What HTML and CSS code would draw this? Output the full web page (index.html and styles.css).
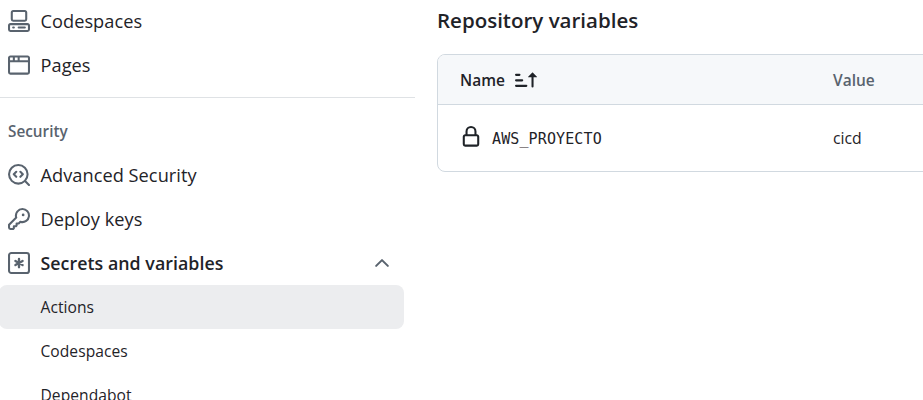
FILE: index.html
```html
<!DOCTYPE html>
<html lang="en">
<head>
<meta charset="utf-8">
<title>Actions secrets and variables</title>
<link rel="stylesheet" href="styles.css">
</head>
<body>
<div class="page">
  <nav class="sidebar">
    <a class="item"><svg class="icon" viewBox="0 0 16 16"><path d="M0 11.25c0-.966.784-1.75 1.75-1.75h12.5c.966 0 1.75.784 1.75 1.75v3A1.75 1.75 0 0 1 14.25 16H1.75A1.75 1.75 0 0 1 0 14.25Zm2-9.5C2 .784 2.784 0 3.75 0h8.5C13.216 0 14 .784 14 1.75v5a1.75 1.75 0 0 1-1.75 1.75h-8.5A1.75 1.75 0 0 1 2 6.75Zm1.75-.25a.25.25 0 0 0-.25.25v5c0 .138.112.25.25.25h8.5a.25.25 0 0 0 .25-.25v-5a.25.25 0 0 0-.25-.25Zm-2 9.5a.25.25 0 0 0-.25.25v3c0 .138.112.25.25.25h12.5a.25.25 0 0 0 .25-.25v-3a.25.25 0 0 0-.25-.25Z"/><path d="M7 12.75a.75.75 0 0 1 .75-.75h4.5a.75.75 0 0 1 0 1.5h-4.5a.75.75 0 0 1-.75-.75Zm-4 0a.75.75 0 0 1 .75-.75h.5a.75.75 0 0 1 0 1.5h-.5a.75.75 0 0 1-.75-.75Z"/></svg><span>Codespaces</span></a>
    <a class="item"><svg class="icon" viewBox="0 0 16 16"><path d="M0 2.75C0 1.784.784 1 1.75 1h12.5c.966 0 1.75.784 1.75 1.75v10.5A1.75 1.75 0 0 1 14.25 15H1.75A1.75 1.75 0 0 1 0 13.25ZM14.5 6h-13v7.25c0 .138.112.25.25.25h12.5a.25.25 0 0 0 .25-.25Zm-6-3.5v2h6V2.75a.25.25 0 0 0-.25-.25ZM5 2.5v2h2v-2Zm-3.25 0a.25.25 0 0 0-.25.25V4.5h2v-2Z"/></svg><span>Pages</span></a>
    <hr class="divider">
    <h3 class="group">Security</h3>
    <a class="item"><svg class="icon line" viewBox="0 0 16 16"><circle cx="7.5" cy="7.5" r="6.75"/><path d="M12.4 12.4l2.85 2.85M6 5.7L4.2 7.5 6 9.3M9 5.7l1.8 1.8L9 9.3"/></svg><span>Advanced Security</span></a>
    <a class="item"><svg class="icon" viewBox="0 0 16 16"><path d="M10.5 0a5.499 5.499 0 1 1-1.288 10.848l-.932.932a.749.749 0 0 1-.53.22H7v.75a.749.749 0 0 1-.22.53l-.5.5a.749.749 0 0 1-.53.22H5v.75a.749.749 0 0 1-.22.53l-.5.5a.749.749 0 0 1-.53.22h-2A1.75 1.75 0 0 1 0 14.25v-2c0-.199.079-.389.22-.53l4.932-4.932A5.5 5.5 0 0 1 10.5 0Zm-4 5.5c-.001.431.069.86.205 1.269a.75.75 0 0 1-.181.768L1.5 12.56v1.69c0 .138.112.25.25.25h1.69l.06-.06v-1.19a.75.75 0 0 1 .75-.75h1.19l.06-.06v-1.19a.75.75 0 0 1 .75-.75h1.19l1.023-1.025a.75.75 0 0 1 .768-.18A4 4 0 1 0 6.5 5.5ZM11 6a1 1 0 1 1 0-2 1 1 0 0 1 0 2Z"/></svg><span>Deploy keys</span></a>
    <a class="item open"><svg class="icon line" viewBox="0 0 16 16"><rect x=".75" y=".75" width="14.5" height="14.5" rx="1.7"/><path class="star" d="M8 5v6M5.4 6.5l5.2 3M10.6 6.5l-5.2 3"/></svg><span>Secrets and variables</span><svg class="icon line chevron" viewBox="0 0 16 16"><path d="M3.75 10.1L8 5.9l4.25 4.2"/></svg></a>
    <a class="item sub current"><span>Actions</span></a>
    <a class="item sub"><span>Codespaces</span></a>
    <a class="item sub"><span>Dependabot</span></a>
  </nav>
  <main class="content">
    <h2 class="title">Repository variables</h2>
    <div class="table">
      <div class="row head">
        <div class="cell name"><span>Name</span><svg class="icon sort" viewBox="0 0 16 16"><path d="m12.927 2.573 3 3A.25.25 0 0 1 15.75 6H13.5v6.75a.75.75 0 0 1-1.5 0V6H9.75a.25.25 0 0 1-.177-.427l3-3a.25.25 0 0 1 .354 0ZM0 12.25a.75.75 0 0 1 .75-.75h7.5a.75.75 0 0 1 0 1.5H.75a.75.75 0 0 1-.75-.75Zm0-4a.75.75 0 0 1 .75-.75h4.5a.75.75 0 0 1 0 1.5H.75A.75.75 0 0 1 0 8.25Zm0-4a.75.75 0 0 1 .75-.75h2.5a.75.75 0 0 1 0 1.5H.75A.75.75 0 0 1 0 4.25Z"/></svg></div>
        <div class="cell muted">Value</div>
      </div>
      <div class="row">
        <div class="cell name"><svg class="icon lock" viewBox="0 0 16 16"><path d="M4 4a4 4 0 0 1 8 0v2h.25c.966 0 1.75.784 1.75 1.75v5.5A1.75 1.75 0 0 1 12.25 15h-8.5A1.75 1.75 0 0 1 2 13.25v-5.5C2 6.784 2.784 6 3.75 6H4Zm8.25 3.5h-8.5a.25.25 0 0 0-.25.25v5.5c0 .138.112.25.25.25h8.5a.25.25 0 0 0 .25-.25v-5.5a.25.25 0 0 0-.25-.25ZM10.5 6V4a2.5 2.5 0 1 0-5 0v2Z"/></svg><code>AWS_PROYECTO</code></div>
        <div class="cell value">cicd</div>
      </div>
    </div>
  </main>
</div>
</body>
</html>
```
FILE: styles.css
```css
* { box-sizing: border-box; }
body {
  margin: 0;
  height: 400px;
  overflow: hidden;
  background: #fff;
  color: #1f2328;
  font-family: "Open Sans", "Noto Sans", sans-serif;
}
.page { display: flex; height: 400px; overflow: hidden; }
.sidebar {
  flex: 0 0 415px;
  display: flex;
  flex-direction: column;
  margin-top: -1px;
}
.item {
  flex: none;
  display: flex;
  align-items: center;
  gap: 10.5px;
  height: 44px;
  padding-left: 8px;
  font-size: 18.2px;
  letter-spacing: 0.04px;
  white-space: nowrap;
}
.icon { flex: none; width: 22px; height: 22px; fill: #59636e; }
.line {
  fill: none;
  stroke: #59636e;
  stroke-width: 1.5;
  stroke-linecap: round;
  stroke-linejoin: round;
}
.star { stroke-width: 1.7; }
.divider {
  flex: none;
  width: 100%;
  height: 1px;
  margin: 10px 0 11px;
  border: 0;
  background: #dfe2e5;
}
.group {
  flex: none;
  margin: 0;
  padding-left: 8px;
  height: 44px;
  line-height: 44px;
  font-size: 15.3px;
  font-weight: 600;
  color: #59636e;
}
.open { font-size: 17.8px; font-weight: 600; }
.chevron { margin-left: auto; margin-right: 22px; }
.sub { font-size: 15.6px; padding-left: 41.5px; margin-left: -1px; margin-right: 11px; }
.current { background: #ecedef; border-radius: 8px; }
.content { flex: none; width: 520px; padding-left: 22px; }
.title {
  margin: 0;
  height: 54px;
  line-height: 40px;
  font-size: 20.5px;
  font-weight: 600;
}
.table {
  border: 1px solid #d1d9e0;
  border-radius: 8px;
  overflow: hidden;
  height: 118px;
}
.row { display: flex; align-items: center; height: 66px; font-size: 15.5px; }
.head {
  height: 50px;
  background: #f6f8fa;
  border-bottom: 1px solid #d1d9e0;
  font-weight: 600;
}
.cell { display: flex; align-items: center; }
.name { flex: 0 0 395px; padding-left: 22px; }
.muted { color: #59636e; }
.value { font-size: 15.8px; }
.sort { margin-left: 10px; fill: #1f2328; }
.lock { margin: -2px 10px 0 0; fill: #1f2328; }
code { padding-top: 2px; font-family: "DejaVu Sans Mono", monospace; font-size: 15px; letter-spacing: 0.12px; }
```
